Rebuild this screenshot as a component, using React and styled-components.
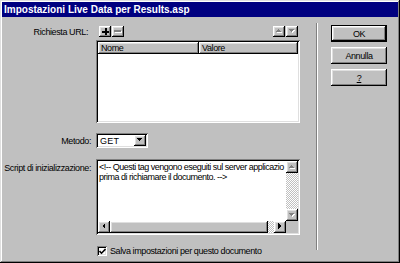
import React from 'react';
import styled, { createGlobalStyle } from 'styled-components';

const Global = createGlobalStyle`
  html, body { margin: 0; padding: 0; background: #c0c0c0; }
  body { font-family: "Liberation Sans", Arial, sans-serif; font-size: 9px; letter-spacing: -0.4px; color: #000; }
  * { box-sizing: border-box; }
`;

const raised = `box-shadow: inset -1px -1px #000, inset 1px 1px #fff, inset -2px -2px #808080, inset 2px 2px #dfdfdf;`;
const sunken = `box-shadow: inset 1px 1px #808080, inset -1px -1px #fff, inset 2px 2px #000, inset -2px -2px #dfdfdf;`;

const Window = styled.div`
  width: 400px;
  height: 263px;
  padding: 2px;
  background: #c0c0c0;
  box-shadow: inset -1px -1px #000, inset 1px 1px #dfdfdf, inset -2px -2px #808080, inset 2px 2px #fff;
  display: flex;
  flex-direction: column;
`;

const TitleBar = styled.div`
  height: 15px;
  flex: none;
  background: #000080;
  color: #fff;
  font-weight: bold;
  font-size: 10px;
  letter-spacing: 0;
  display: flex;
  align-items: center;
  padding-left: 2px;
  white-space: nowrap;
`;

const Body = styled.div`
  display: flex;
  flex: 1;
`;

const Form = styled.div`
  display: flex;
  flex-direction: column;
  padding-left: 1px;
`;

const Row = styled.div`
  display: grid;
  grid-template-columns: 88px 204px;
  column-gap: 5px;
  margin-top: ${p => p.$mt}px;
  height: ${p => p.$h}px;
  align-items: ${p => (p.$top ? 'start' : 'center')};
`;

const Label = styled.div`
  text-align: right;
  white-space: nowrap;
  padding-right: ${p => p.$pr || 0}px;
  padding-top: ${p => p.$pt || 0}px;
`;

const Toolbar = styled.div`
  display: flex;
  justify-content: space-between;
  padding: 0 2px 0 3px;
`;

const Group = styled.div`
  display: flex;
  gap: 1px;
`;

const SmallBtn = styled.div`
  width: 12px;
  height: 11px;
  background: #c0c0c0;
  ${raised}
  display: flex;
  align-items: center;
  justify-content: center;
`;

const ListBox = styled.div`
  grid-column: 2;
  height: 83px;
  background: #fff;
  ${sunken}
  padding: 2px;
`;

const Header = styled.div`
  display: grid;
  grid-template-columns: 101px 1fr;
  height: 12px;
`;

const HeaderCell = styled.div`
  background: #c0c0c0;
  ${raised}
  padding-left: 3px;
  display: flex;
  align-items: center;
`;

const Select = styled.div`
  width: 52px;
  height: 15px;
  background: #fff;
  ${sunken}
  display: flex;
  align-items: center;
  justify-content: space-between;
  padding: 2px 2px 2px 4px;
  letter-spacing: 0.2px;
`;

const DropBtn = styled(SmallBtn)`
  width: 12px;
  height: 11px;
`;

const TextFrame = styled.div`
  height: 76px;
  ${sunken}
  background: #fff;
  padding: 2px;
  display: grid;
  grid-template-columns: 1fr 12px;
  grid-template-rows: 1fr 12px;
`;

const TextContent = styled.div`
  overflow: hidden;
  white-space: pre;
  padding: 1px 0 0 1px;
  line-height: 10px;
  letter-spacing: -0.5px;
`;

const Track = styled.div`
  display: flex;
  flex-direction: ${p => (p.$vertical ? 'column' : 'row')};
  justify-content: space-between;
  background-color: #c0c0c0;
  background-image: conic-gradient(#fff 25%, #c0c0c0 0 50%, #fff 0 75%, #c0c0c0 0);
  background-size: 2px 2px;
`;

const ArrowBtn = styled.div`
  width: 12px;
  height: 12px;
  flex: none;
  background: #c0c0c0;
  ${raised}
  display: flex;
  align-items: center;
  justify-content: center;
`;

const Thumb = styled.div`
  width: 158px;
  background: #c0c0c0;
  ${raised}
`;

const HTrackFill = styled.div`
  flex: 1;
  display: flex;
`;

const Corner = styled.div`
  background: #c0c0c0;
`;

const CheckRow = styled.label`
  display: flex;
  align-items: center;
  gap: 3px;
  padding-left: 1px;
  white-space: nowrap;
`;

const CheckBox = styled.div`
  width: 10px;
  height: 10px;
  background: #fff;
  ${sunken}
  display: flex;
  align-items: center;
  justify-content: center;
`;

const Divider = styled.div`
  width: 2px;
  margin-left: 16px;
  margin-top: 6px;
  height: 227px;
  border-left: 1px solid #808080;
  border-right: 1px solid #fff;
`;

const ButtonCol = styled.div`
  display: flex;
  flex-direction: column;
  gap: 5px;
  margin-left: 13px;
  padding-top: 8px;
`;

const Button = styled.div`
  width: 56px;
  height: 17px;
  background: #c0c0c0;
  display: flex;
  align-items: center;
  justify-content: center;
  ${p =>
    p.$default
      ? `border: 1px solid #000; box-shadow: inset -1px -1px #000, inset 1px 1px #fff, inset -2px -2px #808080, inset 2px 2px #dfdfdf;`
      : raised}
`;

const Underline = styled.span`
  text-decoration: underline;
`;

const Tri = ({ dir, color = '#000', shadow }) => {
  const pts = {
    up: '0,3 3,0 6,3',
    down: '0,0 6,0 3,3',
    left: '3,0 3,6 0,3',
    right: '0,0 0,6 3,3',
  }[dir];
  const vertical = dir === 'up' || dir === 'down';
  const w = vertical ? 7 : 4;
  const h = vertical ? 4 : 7;
  return (
    <svg width={w + 1} height={h + 1} viewBox={`0 0 ${w + 1} ${h + 1}`} shapeRendering="crispEdges">
      {shadow && <polygon points={pts} fill="#fff" transform="translate(1,1)" />}
      <polygon points={pts} fill={color} />
    </svg>
  );
};

const Plus = () => (
  <svg width="7" height="7" viewBox="0 0 7 7" shapeRendering="crispEdges">
    <rect x="0" y="2.5" width="7" height="2" fill="#000" />
    <rect x="2.5" y="0" width="2" height="7" fill="#000" />
  </svg>
);

const Minus = () => (
  <svg width="8" height="3" viewBox="0 0 8 3" shapeRendering="crispEdges">
    <rect x="1" y="1" width="7" height="2" fill="#fff" />
    <rect x="0" y="0" width="7" height="2" fill="#808080" />
  </svg>
);

const Check = () => (
  <svg width="7" height="7" viewBox="0 0 7 7">
    <polyline points="0.5,3 2.5,5.2 6.5,1" fill="none" stroke="#000" strokeWidth="1.6" />
  </svg>
);

export default function App() {
  return (
    <>
      <Global />
      <Window>
        <TitleBar>Impostazioni Live Data per Results.asp</TitleBar>
        <Body>
          <Form>
            <Row $mt={9} $h={11}>
              <Label $pr={3}>Richiesta URL:</Label>
              <Toolbar>
                <Group>
                  <SmallBtn><Plus /></SmallBtn>
                  <SmallBtn><Minus /></SmallBtn>
                </Group>
                <Group>
                  <SmallBtn><Tri dir="up" color="#808080" shadow /></SmallBtn>
                  <SmallBtn><Tri dir="down" color="#808080" shadow /></SmallBtn>
                </Group>
              </Toolbar>
            </Row>
            <Row $mt={3} $h={83}>
              <ListBox>
                <Header>
                  <HeaderCell>Nome</HeaderCell>
                  <HeaderCell>Valore</HeaderCell>
                </Header>
              </ListBox>
            </Row>
            <Row $mt={10} $h={15}>
              <Label>Metodo:</Label>
              <Select>
                <span>GET</span>
                <DropBtn><Tri dir="down" /></DropBtn>
              </Select>
            </Row>
            <Row $mt={11} $h={76} $top>
              <Label $pt={4}>Script di inizializzazione:</Label>
              <TextFrame>
                <TextContent>{'<!-- Questi tag vengono eseguiti sul server applicazio\nprima di richiamare il documento. -->'}</TextContent>
                <Track $vertical>
                  <ArrowBtn><Tri dir="up" color="#808080" shadow /></ArrowBtn>
                  <ArrowBtn><Tri dir="down" color="#808080" shadow /></ArrowBtn>
                </Track>
                <Track>
                  <HTrackFill>
                    <ArrowBtn><Tri dir="left" /></ArrowBtn>
                    <Thumb />
                  </HTrackFill>
                  <ArrowBtn><Tri dir="right" /></ArrowBtn>
                </Track>
                <Corner />
              </TextFrame>
            </Row>
            <Row $mt={11} $h={10}>
              <span />
              <CheckRow>
                <CheckBox><Check /></CheckBox>
                Salva impostazioni per questo documento
              </CheckRow>
            </Row>
          </Form>
          <Divider />
          <ButtonCol>
            <Button $default>OK</Button>
            <Button>Annulla</Button>
            <Button><Underline>?</Underline></Button>
          </ButtonCol>
        </Body>
      </Window>
    </>
  );
}
